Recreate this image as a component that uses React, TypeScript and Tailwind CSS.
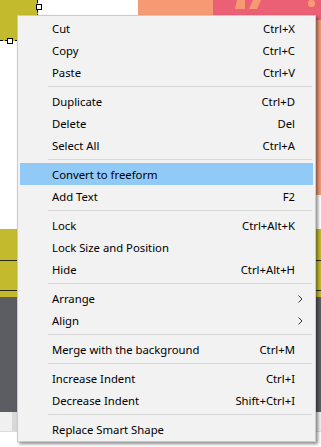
import React from "react";

type Item =
  | { type: "sep" }
  | { type: "item"; label: string; shortcut?: string; sub?: boolean; active?: boolean };

const items: Item[] = [
  { type: "item", label: "Cut", shortcut: "Ctrl+X" },
  { type: "item", label: "Copy", shortcut: "Ctrl+C" },
  { type: "item", label: "Paste", shortcut: "Ctrl+V" },
  { type: "sep" },
  { type: "item", label: "Duplicate", shortcut: "Ctrl+D" },
  { type: "item", label: "Delete", shortcut: "Del" },
  { type: "item", label: "Select All", shortcut: "Ctrl+A" },
  { type: "sep" },
  { type: "item", label: "Convert to freeform", active: true },
  { type: "item", label: "Add Text", shortcut: "F2" },
  { type: "sep" },
  { type: "item", label: "Lock", shortcut: "Ctrl+Alt+K" },
  { type: "item", label: "Lock Size and Position" },
  { type: "item", label: "Hide", shortcut: "Ctrl+Alt+H" },
  { type: "sep" },
  { type: "item", label: "Arrange", sub: true },
  { type: "item", label: "Align", sub: true },
  { type: "sep" },
  { type: "item", label: "Merge with the background", shortcut: "Ctrl+M" },
  { type: "sep" },
  { type: "item", label: "Increase Indent", shortcut: "Ctrl+I" },
  { type: "item", label: "Decrease Indent", shortcut: "Shift+Ctrl+I" },
  { type: "sep" },
  { type: "item", label: "Replace Smart Shape" },
];

function Chevron() {
  return (
    <svg width="5" height="8" viewBox="0 0 5 8" className="block">
      <path d="M0.5 0.5 L4 4 L0.5 7.5" fill="none" stroke="#333" strokeWidth="1" />
    </svg>
  );
}

export default function App() {
  return (
    <div
      className="relative w-[321px] h-[447px] overflow-hidden bg-white"
      style={{ fontFamily: '"Noto Sans", "Open Sans", sans-serif' }}
    >
      {/* background canvas */}
      <div className="flex flex-col w-full h-full">
        <div className="relative h-[229px] bg-white">
          <div className="absolute left-0 top-0 w-[38px] h-[41px] bg-[#c3bb2d] border-r border-b border-dashed border-black" />
          <div className="absolute left-[36px] top-[4px] w-[6px] h-[6px] bg-white border border-black" />
          <div className="absolute left-[7px] top-[38px] w-[6px] h-[6px] bg-white border border-black" />
          <div className="absolute left-[138px] top-0 w-[183px] h-[195px] bg-[#f69a74]" />
          <svg className="absolute left-[213px] top-0" width="108" height="20" viewBox="0 0 108 20">
            <rect x="0" y="0" width="108" height="20" fill="#ec6076" />
            <path d="M24 0 L32 0 L32 9 L22 9 Z" fill="#f69a74" />
            <path d="M40 0 L48 0 L44 9 L36 9 Z" fill="#f69a74" />
            <rect x="95" y="0" width="7" height="7" rx="3" fill="#f69a74" />
          </svg>
        </div>
        <div className="relative h-[68px] bg-[#c3bb2d]">
          <div className="absolute left-0 right-0 top-[31px] h-px bg-[#2a2a10]" />
          <div className="absolute left-0 right-0 top-[61px] h-px bg-[#2a2a10]" />
        </div>
        <div className="h-[115px] bg-[#5b5d63]" />
        <div className="flex h-[20px] bg-[#f0f0f0] border-b border-[#dcdcdc]">
          <div className="ml-[12px] w-[6px] h-full bg-[#d9d9d9]" />
        </div>
        <div className="flex-1 bg-white" />
      </div>

      {/* context menu */}
      <div className="absolute left-[17px] top-[15px] w-[299px] bg-[#f2f2f2] border border-[#cccccc] py-[1px] px-[2px] shadow-[2px_2px_3px_rgba(0,0,0,0.45)] text-[11.3px] leading-none text-black">
        {items.map((it, i) =>
          it.type === "sep" ? (
            <div key={i} className="h-[7px] flex items-center pl-[28px] pr-[1px]">
              <div className="h-px w-full bg-[#d7d7d7]" />
            </div>
          ) : (
            <div
              key={i}
              className={`h-[22px] flex items-center pt-[2px] pl-[32px] pr-[18px] ${it.active ? "bg-[#91c9f7]" : ""}`}
            >
              <span className="flex-1 whitespace-nowrap">{it.label}</span>
              {it.shortcut && <span className="whitespace-nowrap">{it.shortcut}</span>}
              {it.sub && (
                <span className="mr-[-8px]">
                  <Chevron />
                </span>
              )}
            </div>
          )
        )}
      </div>
    </div>
  );
}
